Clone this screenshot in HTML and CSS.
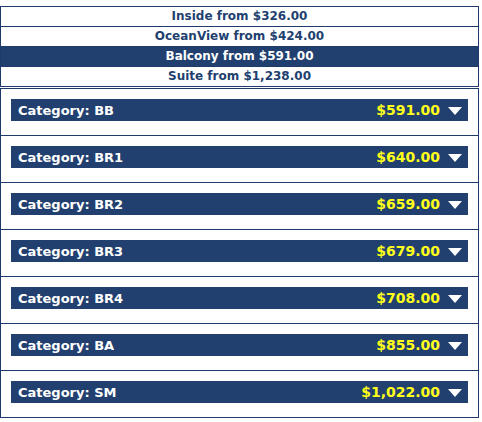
FILE: index.html
```html
<!DOCTYPE html>
<html>
<head>
<meta charset="utf-8">
<link rel="stylesheet" href="styles.css">
</head>
<body>
<div class="page">
  <div class="types">
    <div class="type">Inside from $326.00</div>
    <div class="type">OceanView from $424.00</div>
    <div class="type active">Balcony from $591.00</div>
    <div class="type">Suite from $1,238.00</div>
  </div>
  <div class="cats">
    <div class="cat"><div class="bar"><span class="name">Category: BB</span><span class="price">$591.00</span><span class="arrow"></span></div></div>
    <div class="cat"><div class="bar"><span class="name">Category: BR1</span><span class="price">$640.00</span><span class="arrow"></span></div></div>
    <div class="cat"><div class="bar"><span class="name">Category: BR2</span><span class="price">$659.00</span><span class="arrow"></span></div></div>
    <div class="cat"><div class="bar"><span class="name">Category: BR3</span><span class="price">$679.00</span><span class="arrow"></span></div></div>
    <div class="cat"><div class="bar"><span class="name">Category: BR4</span><span class="price">$708.00</span><span class="arrow"></span></div></div>
    <div class="cat"><div class="bar"><span class="name">Category: BA</span><span class="price">$855.00</span><span class="arrow"></span></div></div>
    <div class="cat"><div class="bar"><span class="name">Category: SM</span><span class="price">$1,022.00</span><span class="arrow"></span></div></div>
  </div>
</div>
</body>
</html>
```

FILE: styles.css
```css
html, body {
  margin: 0;
  padding: 0;
  background: #ffffff;
}
body {
  font-family: "DejaVu Sans", Verdana, sans-serif;
  font-weight: bold;
}
.page {
  width: 479px;
  padding-top: 6px;
}
.types {
  border: 1px solid #1f3b6c;
  border-bottom: none;
}
.type {
  height: 19px;
  line-height: 19px;
  border-bottom: 1px solid #1f3b6c;
  text-align: center;
  font-size: 12px;
  color: #223f70;
}
.type.active {
  background: #22406f;
  color: #ffffff;
}
.cats {
  margin-top: 1px;
}
.cat {
  border: 1px solid #1f3b6c;
  border-bottom: none;
  padding: 10px 10px 14px 10px;
}
.cat:last-child {
  border-bottom: 1px solid #1f3b6c;
}
.bar {
  display: flex;
  align-items: center;
  height: 22px;
  background: #22406f;
  padding: 0 6px 0 7px;
}
.name {
  flex: 1;
  color: #ffffff;
  font-size: 13px;
}
.price {
  color: #ffff1a;
  font-size: 14px;
  margin-right: 8px;
}
.arrow {
  width: 0;
  height: 0;
  margin-top: 1px;
  border-left: 7px solid transparent;
  border-right: 7px solid transparent;
  border-top: 8px solid #ffffff;
}
```
